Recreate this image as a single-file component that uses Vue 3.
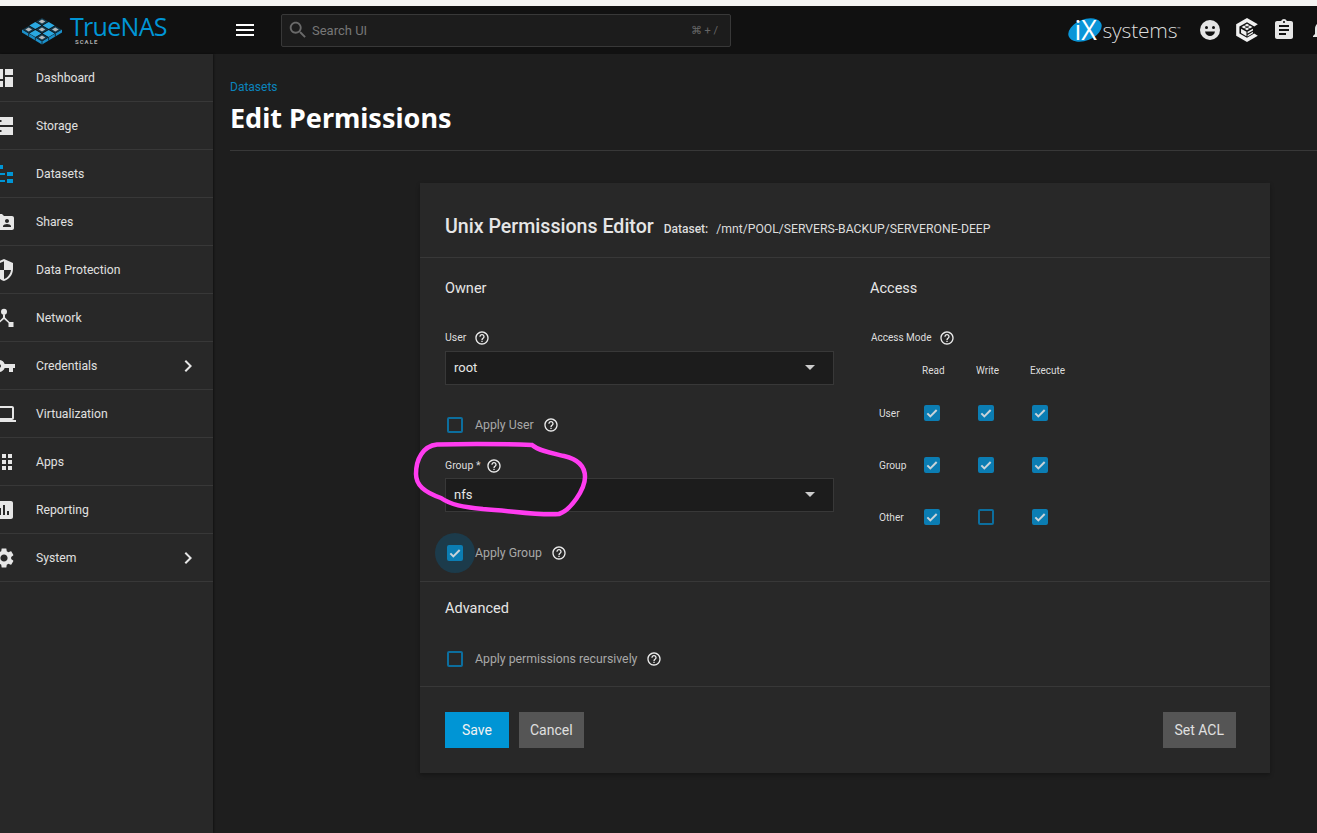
<script setup>
const help = 'M11 18h2v-2h-2v2zm1-16C6.48 2 2 6.48 2 12s4.48 10 10 10 10-4.48 10-10S17.52 2 12 2zm0 18c-4.41 0-8-3.59-8-8s3.59-8 8-8 8 3.59 8 8-3.59 8-8 8zm0-14c-2.21 0-4 1.79-4 4h2c0-1.1.9-2 2-2s2 .9 2 2c0 2-3 1.75-3 5h2c0-2.25 3-2.5 3-5 0-2.21-1.79-4-4-4z'

const navItems = [
  { label: 'Dashboard', d: 'M3 13h8V3H3v10zm0 8h8v-6H3v6zm10 0h8V11h-8v10zm0-18v6h8V3h-8z' },
  { label: 'Storage', rule: 'evenodd', d: 'M3 3h18v8H3V3zm4.500 3v2h2V6h-2zM3 13h18v8H3v-8zm4.500 3v2h2v-2h-2z' },
  { label: 'Datasets', active: true, d: 'M7 3h4v4H7zM4 11h9v2H4zM4 18h9v2H4zM15 10h6v4h-6zM15 17h6v4h-6z' },
  { label: 'Shares', d: 'M20 6h-8l-2-2H4c-1.1 0-1.99.9-1.99 2L2 18c0 1.1.9 2 2 2h16c1.1 0 2-.9 2-2V8c0-1.1-.9-2-2-2zm-5 3c1.1 0 2 .9 2 2s-.9 2-2 2-2-.9-2-2 .9-2 2-2zm4 8h-8v-1c0-1.33 2.67-2 4-2s4 .67 4 2v1z' },
  { label: 'Data Protection', d: 'M12 1L3 5v6c0 5.55 3.84 10.74 9 12 5.16-1.26 9-6.45 9-12V5l-9-4zm0 10.99h7c-.53 4.12-3.28 7.79-7 8.94V12H5V6.3l7-3.11v8.8z' },
  { label: 'Network', d: 'M12 2.700a3 3 0 1 1 0 6 3 3 0 0 1 0-6zM11 8h2v3.500l4.500 4.500h4v5h-5v-4L12 13l-4.500 4v4h-5v-5h4l4.500-4.500z' },
  { label: 'Credentials', more: true, d: 'M12.65 10C11.83 7.67 9.61 6 7 6c-3.31 0-6 2.69-6 6s2.69 6 6 6c2.61 0 4.83-1.67 5.65-4H17v4h4v-4h2v-4H12.65zM7 14c-1.1 0-2-.9-2-2s.9-2 2-2 2 .9 2 2-.9 2-2 2z' },
  { label: 'Virtualization', d: 'M20 18c1.1 0 1.99-.9 1.99-2L22 6c0-1.1-.9-2-2-2H4c-1.1 0-2 .9-2 2v10c0 1.1.9 2 2 2H0v2h24v-2h-4zM4 6h16v10H4V6z' },
  { label: 'Apps', d: 'M4 8h4V4H4v4zm6 12h4v-4h-4v4zm-6 0h4v-4H4v4zm0-6h4v-4H4v4zm6 0h4v-4h-4v4zm6-10v4h4V4h-4zm-6 4h4V4h-4v4zm6 6h4v-4h-4v4zm0 6h4v-4h-4v4z' },
  { label: 'Reporting', d: 'M19 3H5c-1.1 0-2 .9-2 2v14c0 1.1.9 2 2 2h14c1.1 0 2-.9 2-2V5c0-1.1-.9-2-2-2zM9 17H7v-7h2v7zm4 0h-2V7h2v10zm4 0h-2v-4h2v4z' },
  { label: 'System', more: true, d: 'M19.14 12.94c.04-.3.06-.61.06-.94 0-.32-.02-.64-.07-.94l2.03-1.58c.18-.14.23-.41.12-.61l-1.92-3.32c-.12-.22-.37-.29-.59-.22l-2.39.96c-.5-.38-1.03-.7-1.62-.94l-.36-2.54c-.04-.24-.24-.41-.48-.41h-3.84c-.24 0-.43.17-.47.41l-.36 2.54c-.59.24-1.13.57-1.62.94l-2.39-.96c-.22-.08-.47 0-.59.22L2.74 8.87c-.12.21-.08.47.12.61l2.03 1.58c-.05.3-.09.63-.09.94s.02.64.07.94l-2.03 1.58c-.18.14-.23.41-.12.61l1.92 3.32c.12.22.37.29.59.22l2.39-.96c.5.38 1.03.7 1.62.94l.36 2.54c.05.24.24.41.48.41h3.84c.24 0 .44-.17.47-.41l.36-2.54c.59-.24 1.13-.56 1.62-.94l2.39.96c.22.08.47 0 .59-.22l1.92-3.32c.12-.22.07-.47-.12-.61l-2.01-1.58zM12 15.6c-1.98 0-3.6-1.62-3.6-3.6s1.62-3.6 3.6-3.6 3.6 1.62 3.6 3.6-1.62 3.6-3.6 3.6z' },
]

const accessRows = [
  { name: 'User', flags: [true, true, true] },
  { name: 'Group', flags: [true, true, true] },
  { name: 'Other', flags: [true, false, true] },
]

// logo: 3x3 isometric grid, odd cells blue, even cells a dark socket with a grey chip
const gridPoint = (u, v) => [20 + (u - v) * 20 / 3, 0.5 + (u + v) * 4]
const cellPoints = (u, v, inset = 0) => {
  const pts = [[u + inset, v + inset], [u + 1 - inset, v + inset], [u + 1 - inset, v + 1 - inset], [u + inset, v + 1 - inset]]
  return pts.map(p => gridPoint(p[0], p[1]).join(',')).join(' ')
}
const logoCells = []
for (let u = 0; u < 3; u++) {
  for (let v = 0; v < 3; v++) {
    logoCells.push({ id: `${u}${v}`, blue: (u + v) % 2 === 1, face: cellPoints(u, v, 0.05), chip: cellPoints(u, v, 0.25) })
  }
}
</script>

<template>
  <div class="page">
    <div class="strip"></div>

    <header class="topbar">
      <div class="brand">
        <svg class="brand-mark" viewBox="0 0 40 28" width="40" height="28">
          <polygon points="0,12.500 20,24.500 40,12.500 40,15.500 20,27.500 0,15.500" fill="#1b8fc9" />
          <path d="M13.300 20.500v3M26.700 20.500v3M6.700 16.500v3M33.300 16.500v3M20 24.500v3" stroke="#111" stroke-width=".8" />
          <template v-for="c in logoCells" :key="c.id">
            <polygon :points="c.face" :fill="c.blue ? '#2aa9e2' : '#123a4f'" />
            <polygon v-if="!c.blue" :points="c.chip" fill="#b4b8bb" />
          </template>
        </svg>
        <div class="brand-text">
          <span class="brand-name">True<b>NAS</b></span>
          <span class="brand-sub">SCALE</span>
        </div>
      </div>

      <button class="menu-btn" aria-label="menu">
        <svg viewBox="0 0 24 24" width="24" height="24"><path fill="#fff" d="M3 18h18v-2H3v2zm0-5h18v-2H3v2zm0-7v2h18V6H3z" /></svg>
      </button>

      <div class="search">
        <svg viewBox="0 0 24 24" width="22" height="22"><path fill="#6a6a6a" d="M15.5 14h-.79l-.28-.27C15.41 12.59 16 11.11 16 9.5 16 5.91 13.09 3 9.5 3S3 5.91 3 9.5 5.91 16 9.5 16c1.61 0 3.09-.59 4.23-1.57l.27.28v.79l5 4.99L20.49 19l-4.99-5zm-6 0C7.01 14 5 11.99 5 9.5S7.01 5 9.5 5 14 7.01 14 9.5 11.99 14 9.5 14z" /></svg>
        <span class="search-text">Search UI</span>
        <span class="search-key">⌘ + /</span>
      </div>

      <div class="top-right">
        <div class="ix">
          <svg viewBox="0 0 36 28" width="36" height="28" class="ix-oval"><ellipse cx="18" cy="14" rx="17.500" ry="10.500" fill="#0a95d8" transform="rotate(-22 18 14)" /></svg>
          <span class="ix-letters">iX</span>
          <span class="ix-name">systems</span><span class="ix-tm">™</span>
        </div>
        <svg class="top-icon" viewBox="0 0 24 24" width="24" height="24">
          <circle cx="12" cy="12" r="10" fill="#e6e6e6" />
          <circle cx="8.500" cy="9.500" r="1.500" fill="#111" />
          <circle cx="15.500" cy="9.500" r="1.500" fill="#111" />
          <path d="M7 13.500h10c-.5 2.800-2.500 4.500-5 4.500s-4.500-1.700-5-4.500z" fill="#111" />
        </svg>
        <svg class="top-icon tc" viewBox="0 0 24 24" width="26" height="26">
          <path fill="#f0f0f0" d="M12 1l10 5.800-3.300 1.900L12 4.800 5 8.800v6.400l7 4 6.700-3.900 3.300 1.900L12 23 2 17.200V6.800z" />
          <path fill="#f0f0f0" d="M12 6.300l5 3-5 3-5-3zM6.500 10.800l5 2.900v4l-5-2.900zM17.500 10.800v1.600l-5 2.900v-1.600zM17.500 13.600v1.400l-5 2.900v-1.400z" />
          <path fill="none" stroke="#111" stroke-width=".8" d="M9.500 7.800l5 3M14.500 7.800l-5 3" />
        </svg>
        <svg class="top-icon" viewBox="0 0 24 24" width="24" height="24">
          <path fill="#e6e6e6" d="M19 3h-4.180C14.400 1.840 13.300 1 12 1c-1.300 0-2.400.84-2.820 2H5c-1.100 0-2 .9-2 2v14c0 1.100.9 2 2 2h14c1.100 0 2-.9 2-2V5c0-1.100-.9-2-2-2zm-7 0c.55 0 1 .45 1 1s-.45 1-1 1-1-.45-1-1 .45-1 1-1zm2 14H7v-2h7v2zm3-4H7v-2h10v2zm0-4H7V7h10v2z" />
        </svg>
        <svg class="top-icon" viewBox="0 0 24 24" width="24" height="24">
          <path fill="#e6e6e6" d="M12 22c1.100 0 2-.9 2-2h-4c0 1.100.89 2 2 2zm6-6v-5c0-3.070-1.640-5.640-4.500-6.320V4c0-.83-.67-1.500-1.500-1.500s-1.500.67-1.500 1.500v.68C7.630 5.360 6 7.920 6 11v5l-2 2v1h16v-1l-2-2z" />
        </svg>
      </div>
    </header>

    <div class="body-row">
      <nav class="sidebar">
        <a v-for="item in navItems" :key="item.label" class="nav-item">
          <svg class="nav-icon" viewBox="0 0 24 24" width="24" height="24"><path :fill="item.active ? '#0095d5' : '#e6e6e6'" :fill-rule="item.rule || 'nonzero'" :d="item.d" /></svg>
          <span class="nav-label">{{ item.label }}</span>
          <svg v-if="item.more" class="nav-more" viewBox="0 0 24 24" width="24" height="24"><path fill="#e6e6e6" d="M10 6L8.590 7.410 13.170 12l-4.580 4.590L10 18l6-6z" /></svg>
        </a>
      </nav>

      <main class="content">
        <div class="page-head">
          <a class="crumb">Datasets</a>
          <h1>Edit Permissions</h1>
        </div>

        <section class="card">
          <div class="card-title">
            <h2>Unix Permissions Editor</h2>
            <span class="ds-key">Dataset:</span>
            <span class="ds-path">/mnt/POOL/SERVERS-BACKUP/SERVERONE-DEEP</span>
          </div>

          <div class="columns">
            <div class="col-owner">
              <h3>Owner</h3>

              <div class="field-label first">User
                <svg class="help" viewBox="0 0 24 24"><path :d="help" /></svg>
              </div>
              <div class="select"><span>root</span><i class="caret"></i></div>

              <label class="check-row apply-user">
                <span class="box"></span>
                <span class="check-text">Apply User</span>
                <svg class="help" viewBox="0 0 24 24"><path :d="help" /></svg>
              </label>

              <div class="field-label group">Group *
                <svg class="help" viewBox="0 0 24 24"><path :d="help" /></svg>
              </div>
              <div class="select tight"><span>nfs</span><i class="caret"></i></div>

              <label class="check-row apply-group">
                <span class="box on halo">
                  <svg viewBox="0 0 24 24"><path d="M5 12.500l4.500 4.500L19 7.500" /></svg>
                </span>
                <span class="check-text">Apply Group</span>
                <svg class="help" viewBox="0 0 24 24"><path :d="help" /></svg>
              </label>
            </div>

            <div class="col-access">
              <h3>Access</h3>
              <div class="field-label first">Access Mode
                <svg class="help" viewBox="0 0 24 24"><path :d="help" /></svg>
              </div>
              <div class="access-grid">
                <span></span>
                <span class="head">Read</span>
                <span class="head">Write</span>
                <span class="head">Execute</span>
                <template v-for="row in accessRows" :key="row.name">
                  <span class="row-name">{{ row.name }}</span>
                  <span v-for="(on, i) in row.flags" :key="i" class="cell">
                    <span class="box" :class="{ on }">
                      <svg v-if="on" viewBox="0 0 24 24"><path d="M5 12.500l4.500 4.500L19 7.500" /></svg>
                    </span>
                  </span>
                </template>
              </div>
            </div>
          </div>

          <div class="advanced">
            <h3>Advanced</h3>
            <label class="check-row recursive">
              <span class="box"></span>
              <span class="check-text">Apply permissions recursively</span>
              <svg class="help" viewBox="0 0 24 24"><path :d="help" /></svg>
            </label>
          </div>

          <div class="actions">
            <button class="btn primary">Save</button>
            <button class="btn">Cancel</button>
            <button class="btn push">Set ACL</button>
          </div>

          <!-- hand-drawn marker over the group field -->
          <svg class="marker" viewBox="0 0 180 80" width="180" height="80">
            <path d="M24 3.500C58 2.500 93 3 119 4c7 6 19 8 32 11 13 3 21 10 21 21 0 12-14 33-26 37-18 2-46-3-76-5-20-2-32-4-42-11C11 51 3 44 3 33 3 18 10 5 24 3.500z" />
          </svg>
        </section>
      </main>
    </div>
  </div>
</template>

<style>
html, body {
  margin: 0;
  background: #1e1e1e;
  overflow: hidden;
}
</style>

<style scoped>
.page {
  width: 1317px;
  height: 833px;
  display: flex;
  flex-direction: column;
  overflow: hidden;
  font-family: Roboto, "Liberation Sans", sans-serif;
  color: #e6e6e6;
  background: #1e1e1e;
}

.strip {
  height: 6px;
  flex: none;
  background: #f5f4f2;
}

.topbar {
  height: 48px;
  flex: none;
  display: flex;
  align-items: center;
  background: #111;
}

.brand {
  width: 233px;
  flex: none;
  display: flex;
  align-items: center;
  padding-left: 22px;
  box-sizing: border-box;
}

.brand-mark {
  flex: none;
  margin-top: 1px;
}

.brand-text {
  display: flex;
  flex-direction: column;
  margin-left: 8px;
  margin-top: -1px;
}

.brand-name {
  font-family: "Open Sans", sans-serif;
  font-size: 25px;
  line-height: 24px;
  color: #0095d5;
  letter-spacing: -0.7px;
}

.brand-name b {
  font-weight: 500;
}

.brand-sub {
  font-size: 6px;
  line-height: 6px;
  letter-spacing: 1px;
  font-weight: 700;
  color: #aaa;
  margin: 1px 0 0 5px;
}

.menu-btn {
  width: 24px;
  height: 24px;
  padding: 0;
  border: none;
  background: none;
  flex: none;
}

.search {
  margin-left: 24px;
  width: 450px;
  height: 33px;
  flex: none;
  box-sizing: border-box;
  display: flex;
  align-items: center;
  padding: 0 12px 0 5px;
  background: #1c1c1c;
  border: 1px solid #383838;
  border-radius: 2px;
}

.search-text {
  margin-left: 3px;
  font-size: 13px;
  color: #777;
}

.search-key {
  margin-left: auto;
  font-size: 11px;
  color: #666;
}

.top-right {
  margin-left: auto;
  display: flex;
  align-items: center;
  gap: 13px;
  margin-right: -16px;
}

.ix {
  display: flex;
  align-items: center;
  position: relative;
  margin-right: 4px;
}

.ix-oval {
  flex: none;
}

.ix-letters {
  position: absolute;
  left: 8px;
  top: 0;
  font-size: 27px;
  line-height: 28px;
  color: #fff;
  font-family: "Open Sans", sans-serif;
  font-weight: 400;
}

.ix-name {
  font-family: "Open Sans", sans-serif;
  font-weight: 300;
  font-size: 21px;
  color: #ddd;
  margin-left: 0;
  letter-spacing: -0.2px;
}

.ix-tm {
  font-size: 6px;
  color: #ccc;
  align-self: flex-start;
  margin-top: 9px;
}

.top-icon {
  flex: none;
}

.top-icon.tc {
  margin: 0 -1px;
}

.body-row {
  flex: 1;
  display: flex;
  min-height: 0;
}

.sidebar {
  width: 213px;
  flex: none;
  background: #282828;
  box-shadow: 1px 0 2px rgba(0, 0, 0, 0.4);
}

.nav-item {
  height: 48px;
  box-sizing: border-box;
  display: flex;
  align-items: center;
  border-bottom: 1px solid #383838;
  font-size: 12.200px;
  color: #e0e0e0;
}

.nav-icon {
  margin-left: -8px;
  margin-right: 20px;
  flex: none;
}

.nav-more {
  margin-left: auto;
  margin-right: 13px;
}

.content {
  flex: 1;
  min-width: 0;
}

.page-head {
  margin-left: 17px;
  padding-top: 25px;
  height: 97px;
  box-sizing: border-box;
  border-bottom: 1px solid #383838;
}

.crumb {
  display: block;
  font-size: 12px;
  line-height: 16px;
  color: #0b84bd;
}

h1 {
  margin: 5px 0 0;
  font-family: "Noto Sans", sans-serif;
  font-size: 27px;
  line-height: 36px;
  font-weight: 700;
  color: #fff;
}

.card {
  position: relative;
  isolation: isolate;
  width: 850px;
  margin: 32px 0 0 207px;
  background: #282828;
  box-shadow: 0 2px 4px rgba(0, 0, 0, 0.3);
}

.card-title {
  height: 75px;
  box-sizing: border-box;
  padding: 32px 25px 0;
  display: flex;
  align-items: baseline;
  border-bottom: 1px solid #383838;
}

h2 {
  margin: 0;
  font-size: 19.600px;
  line-height: 24px;
  font-weight: 500;
  color: #e6e6e6;
}

.ds-key {
  margin-left: 10px;
  font-size: 12px;
  font-weight: 500;
  color: #ddd;
}

.ds-path {
  margin-left: 8px;
  font-size: 12.200px;
  color: #ddd;
}

.columns {
  display: flex;
  height: 323px;
}

.col-owner {
  width: 389px;
  margin-left: 25px;
  flex: none;
}

.col-access {
  margin-left: 36px;
  flex: 1;
}

h3 {
  margin: 0;
  padding-top: 21px;
  font-size: 14.500px;
  line-height: 20px;
  font-weight: 400;
  color: #e6e6e6;
}

.field-label {
  display: flex;
  align-items: center;
  gap: 8px;
  font-size: 10.500px;
  line-height: 16px;
  color: #ddd;
  height: 16px;
}

.field-label.first {
  margin-top: 31px;
}

.field-label.group {
  margin-top: 23px;
  gap: 6px;
}

.help {
  width: 16px;
  height: 16px;
  flex: none;
  fill: #ececec;
}

.select {
  height: 34px;
  margin-top: 5px;
  box-sizing: border-box;
  display: flex;
  align-items: center;
  justify-content: space-between;
  padding: 0 18px 2px 8px;
  background: #1c1c1c;
  border: 1px solid #383838;
  font-size: 13px;
  color: #e6e6e6;
}

.select.tight {
  margin-top: 4px;
}

.caret {
  width: 0;
  height: 0;
  border-left: 5px solid transparent;
  border-right: 5px solid transparent;
  border-top: 5px solid #ccc;
}

.check-row {
  display: flex;
  align-items: center;
  height: 20px;
}

.apply-user {
  margin-top: 30px;
  padding-left: 2px;
}

.apply-group {
  margin-top: 31px;
  padding-left: 2px;
}

.recursive {
  margin-top: 30px;
  padding-left: 27px;
}

.check-text {
  margin-left: 12px;
  margin-right: 9px;
  font-size: 12.300px;
  color: #a8a8a8;
}

.box {
  width: 16px;
  height: 16px;
  flex: none;
  box-sizing: border-box;
  display: block;
  position: relative;
  border: 2px solid #0c6e9e;
  border-radius: 2px;
}

.box.on {
  background: #0b7db3;
  border-color: #0b7db3;
}

.box svg {
  position: absolute;
  inset: -2px;
  width: 16px;
  height: 16px;
  fill: none;
  stroke: #c9d3d9;
  stroke-width: 3;
}

.box.halo::before {
  content: "";
  position: absolute;
  z-index: -1;
  left: -14px;
  top: -14px;
  width: 40px;
  height: 40px;
  border-radius: 50%;
  background: #1c3b4b;
}

.access-grid {
  display: grid;
  grid-template-columns: 27px 54px 54px 54px;
  grid-template-rows: 34px 52px 52px 52px;
  margin: 7px 0 0 9px;
  align-items: center;
}

.col-access .field-label {
  margin-left: 1px;
  font-size: 10px;
}

.head {
  margin-left: 16px;
  font-size: 10px;
  color: #ddd;
  white-space: nowrap;
}

.row-name {
  font-size: 10.200px;
  color: #ddd;
  white-space: nowrap;
}

.cell {
  margin-left: 18px;
}

.advanced {
  height: 106px;
  box-sizing: border-box;
  border-top: 1px solid #383838;
  border-bottom: 1px solid #383838;
}

.advanced h3 {
  padding-left: 25px;
  padding-top: 17px;
}

.actions {
  display: flex;
  gap: 10px;
  padding: 25px 34px 25px 25px;
}

.btn {
  height: 36px;
  padding: 0 11px;
  border: none;
  background: #555;
  color: #e0e0e0;
  font-family: Roboto, sans-serif;
  font-size: 14px;
}

.btn.primary {
  width: 64px;
  background: #0095d5;
  color: #f2f2f2;
}

.btn.push {
  margin-left: auto;
  padding: 0 12px;
}

.marker {
  position: absolute;
  left: -7px;
  top: 258px;
  fill: none;
  stroke: #ff3cf0;
  stroke-width: 4.500;
}
</style>
